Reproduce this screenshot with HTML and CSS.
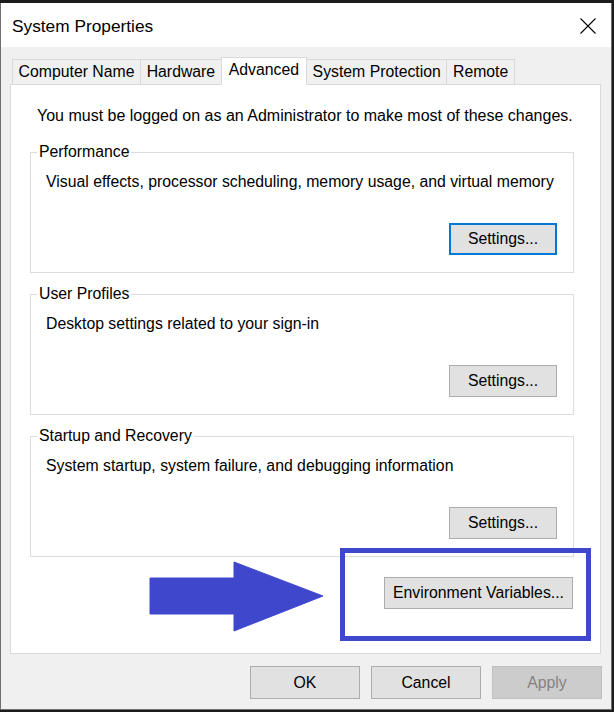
FILE: index.html
```html
<!DOCTYPE html>
<html lang="en">
<head>
    <meta charset="UTF-8">
    <title>System Properties</title>
    <link rel="stylesheet" href="styles.css">
</head>
<body>
    <div class="window">
        <div class="titlebar">
            <span class="title">System Properties</span>
            <svg class="close" width="16" height="16" viewBox="0 0 16 16">
                <path d="M0.5 0.5 L15.5 15.5 M15.5 0.5 L0.5 15.5" stroke="#000" stroke-width="1.1" fill="none"/>
            </svg>
        </div>
        <div class="content">
            <div class="tabs">
                <div class="tab">Computer Name</div>
                <div class="tab">Hardware</div>
                <div class="tab active">Advanced</div>
                <div class="tab">System Protection</div>
                <div class="tab">Remote</div>
            </div>
            <div class="page">
                <p class="notice">You must be logged on as an Administrator to make most of these changes.</p>

                <fieldset class="group">
                    <legend>Performance</legend>
                    <p class="desc">Visual effects, processor scheduling, memory usage, and virtual memory</p>
                    <div class="group-actions">
                        <button class="button focused">Settings...</button>
                    </div>
                </fieldset>

                <fieldset class="group">
                    <legend>User Profiles</legend>
                    <p class="desc">Desktop settings related to your sign-in</p>
                    <div class="group-actions">
                        <button class="button">Settings...</button>
                    </div>
                </fieldset>

                <fieldset class="group">
                    <legend>Startup and Recovery</legend>
                    <p class="desc">System startup, system failure, and debugging information</p>
                    <div class="group-actions">
                        <button class="button">Settings...</button>
                    </div>
                </fieldset>

                <div class="env-row">
                    <button class="button env">Environment Variables...</button>
                </div>
            </div>
            <div class="footer">
                <button class="button wide">OK</button>
                <button class="button wide">Cancel</button>
                <button class="button wide" disabled>Apply</button>
            </div>
        </div>
    </div>

    <!-- annotation drawn over the screenshot -->
    <svg class="arrow" width="178" height="74" viewBox="0 0 178 74">
        <polygon points="2,18 86,18 86,2 175,36 86,71 86,54 2,54" fill="#3f48cc" stroke="#3f48cc" stroke-width="1" stroke-linejoin="round"/>
    </svg>
    <div class="highlight"></div>
</body>
</html>
```

FILE: styles.css
```css
body {
    margin: 0;
    padding-top: 3px;
    background: #1c1c1c;
    font-family: "Liberation Sans", Arial, sans-serif;
    font-size: 15.8px;
    color: #000;
    position: relative;
    height: 709px;
    overflow: hidden;
}
.window {
    width: 610px;
    background: #f0f0f0;
    border-left: 1px solid #6f6f6f;
    border-right: 1px solid #6f6f6f;
    border-bottom: 1px solid #6f6f6f;
}
.titlebar {
    height: 44px;
    background: #fff;
    display: flex;
    align-items: center;
    justify-content: space-between;
    padding: 0 15px 0 11px;
}
.title {
    font-size: 17.3px;
    margin-top: 2px;
}
.close { display: block; margin-top: 2px; }

.content {
    padding: 10px 10px 10px 9px;
}
.tabs {
    display: flex;
    align-items: flex-end;
    margin: 0 0 -1px 2px;
    position: relative;
    z-index: 1;
}
.tab {
    box-sizing: border-box;
    height: 26px;
    line-height: 24px;
    padding: 0 5.6px;
    border: 1px solid #d9d9d9;
    margin-right: -1px;
    background: #f0f0f0;
    white-space: nowrap;
}
.tab.active {
    height: 28px;
    padding: 0 7px 2px;
    background: #fff;
    border-bottom-color: #fff;
    position: relative;
    z-index: 2;
}
.page {
    background: #fff;
    border: 1px solid #d9d9d9;
    padding: 22px 0 44px;
}
.notice {
    margin: 0 0 18px 26px;
    line-height: 18px;
    font-size: 16px;
}
.group {
    margin: 0 26px 12px 19px;
    padding: 0 16px 17px 15px;
    border: 1px solid #dcdcdc;
}
.group legend {
    margin-left: -9px;
    padding: 0 2px;
    line-height: 18px;
}
.desc {
    margin: 12px 0 32px;
    line-height: 18px;
}
.group-actions {
    display: flex;
    justify-content: flex-end;
}
.env-row {
    display: flex;
    justify-content: flex-end;
    margin: 20px 27px 0 0;
}
.button {
    box-sizing: border-box;
    width: 108px;
    height: 32px;
    padding: 0;
    font-family: inherit;
    font-size: 15.8px;
    color: #000;
    background: #e1e1e1;
    border: 1px solid #adadad;
    border-radius: 0;
}
.button.focused {
    border: 2px solid #0078d7;
}
.button.env { width: 189px; }
.button.wide { width: 110px; height: 33px; }
.button:disabled {
    background: #cccccc;
    border-color: #bfbfbf;
    color: #838383;
}
.footer {
    display: flex;
    justify-content: flex-end;
    gap: 11px;
    margin: 12px -1px 0 0;
}

.arrow {
    position: absolute;
    left: 148px;
    top: 560px;
}
.highlight {
    position: absolute;
    left: 340px;
    top: 548px;
    width: 241px;
    height: 83px;
    border: 5px solid #3f48cc;
}
```
